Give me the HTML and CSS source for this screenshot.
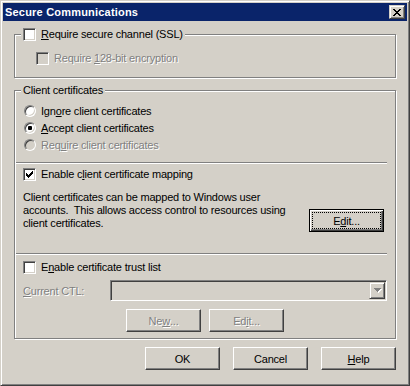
FILE: index.html
```html
<!DOCTYPE html>
<html lang="en">
<head>
    <meta charset="UTF-8">
    <title>Secure Communications</title>
    <link rel="stylesheet" href="styles.css">
</head>
<body>
    <div class="window">
        <!-- Title bar -->
        <div class="titlebar">
            <span class="title">Secure Communications</span>
            <span class="caption-btn">
                <svg width="8" height="7" viewBox="0 0 8 7" shape-rendering="crispEdges"><path fill="#000" d="M0 0h2v1h-2z M6 0h2v1h-2z M1 1h2v1h-2z M5 1h2v1h-2z M2 2h4v1h-4z M3 3h2v1h-2z M2 4h4v1h-4z M1 5h2v1h-2z M5 5h2v1h-2z M0 6h2v1h-2z M6 6h2v1h-2z"/></svg>
            </span>
        </div>

        <div class="dialog">
            <!-- SSL group -->
            <fieldset class="group">
                <legend>
                    <span class="option">
                        <span class="check"></span>
                        <span><u>R</u>equire secure channel (SSL)</span>
                    </span>
                </legend>
                <div class="option indent disabled">
                    <span class="check off"></span>
                    <span>Require <u>1</u>28-bit encryption</span>
                </div>
            </fieldset>

            <!-- Client certificates group -->
            <fieldset class="group client">
                <legend>Client certificates</legend>
                <div class="radios">
                    <div class="radio-row">
                        <span class="radio"></span>
                        <span>Ign<u>o</u>re client certificates</span>
                    </div>
                    <div class="radio-row">
                        <span class="radio"><span class="dot"></span></span>
                        <span><u>A</u>ccept client certificates</span>
                    </div>
                    <div class="radio-row disabled">
                        <span class="radio off"></span>
                        <span>Req<u>u</u>ire client certificates</span>
                    </div>
                </div>

                <div class="separator"></div>

                <div class="option mapping-check">
                    <span class="check">
                        <svg width="7" height="7" viewBox="0 0 7 7" shape-rendering="crispEdges"><path fill="#000" d="M6 0h1v1h-1z M5 1h2v1h-2z M0 2h1v1h-1z M4 2h3v1h-3z M0 3h2v1h-2z M3 3h3v1h-3z M0 4h5v1h-5z M1 5h3v1h-3z M2 6h1v1h-1z"/></svg>
                    </span>
                    <span>Enable c<u>l</u>ient certificate mapping</span>
                </div>

                <div class="mapping">
                    <p>Client certificates can be mapped to Windows user<br>accounts.&nbsp; This allows access control to resources using<br>client certificates.</p>
                    <button class="btn default"><span class="focus">E<u>d</u>it...</span></button>
                </div>

                <div class="separator second"></div>

                <div class="option ctl-check">
                    <span class="check"></span>
                    <span>E<u>n</u>able certificate trust list</span>
                </div>

                <div class="ctl-row">
                    <span class="ctl-label disabled"><u>C</u>urrent CTL:</span>
                    <div class="combo">
                        <span class="combo-btn">
                            <svg width="8" height="5" viewBox="0 0 8 5" shape-rendering="crispEdges"><path fill="#fff" d="M1 1h7v1h-7z M2 2h5v1h-5z M3 3h3v1h-3z M4 4h1v1h-1z"/><path fill="#808080" d="M0 0h7v1h-7z M1 1h5v1h-5z M2 2h3v1h-3z M3 3h1v1h-1z"/></svg>
                        </span>
                    </div>
                </div>

                <div class="ctl-buttons">
                    <button class="btn disabled">Ne<u>w</u>...</button>
                    <button class="btn disabled">Ed<u>i</u>t...</button>
                </div>
            </fieldset>

            <div class="dialog-buttons">
                <button class="btn">OK</button>
                <button class="btn">Cancel</button>
                <button class="btn"><u>H</u>elp</button>
            </div>
        </div>
    </div>
</body>
</html>
```

FILE: styles.css
```css
* {
    box-sizing: border-box;
}

body {
    margin: 0;
    font-family: "Liberation Sans", Arial, sans-serif;
    font-size: 11px;
    letter-spacing: -0.2px;
    color: #000;
    background-color: #d4d0c8;
}

.window {
    width: 410px;
    height: 386px;
    padding: 2px;
    border: 1px solid;
    border-color: #d4d0c8 #404040 #404040 #d4d0c8;
    box-shadow: inset 1px 1px 0 #fff, inset -1px -1px 0 #808080;
    background-color: #d4d0c8;
}

.titlebar {
    height: 18px;
    padding: 0 2px;
    display: flex;
    align-items: center;
    justify-content: space-between;
    background-color: #0a246a;
}

.title {
    color: #fff;
    font-weight: bold;
    letter-spacing: 0.2px;
}

.caption-btn {
    width: 16px;
    height: 14px;
    display: flex;
    align-items: center;
    justify-content: center;
    border: 1px solid;
    border-color: #d4d0c8 #404040 #404040 #d4d0c8;
    box-shadow: inset 1px 1px 0 #fff, inset -1px -1px 0 #808080;
    background-color: #d4d0c8;
}

.dialog {
    padding: 7px 11px 0;
}

u {
    text-underline-offset: 1px;
}

.disabled {
    color: #808080;
    text-shadow: 1px 1px 0 #fff;
}

/* group boxes */
.group {
    margin: 0;
    padding: 0 8px 12px;
    min-inline-size: 0;
    border: 1px solid #808080;
    box-shadow: inset 1px 1px 0 #fff, 1px 1px 0 #fff;
}

.group legend {
    margin-left: -2px;
    padding: 0 2px;
    height: 13px;
    line-height: 13px;
    background-color: #d4d0c8;
}

.group.client {
    margin-top: 6px;
    padding-bottom: 6px;
}

.option {
    display: flex;
    align-items: center;
    gap: 5px;
    height: 13px;
    line-height: 13px;
}

.option.indent {
    margin: 11px 0 0 13px;
}

.check {
    width: 13px;
    height: 13px;
    flex: none;
    display: flex;
    align-items: center;
    justify-content: center;
    border: 1px solid;
    border-color: #808080 #fff #fff #808080;
    box-shadow: inset 1px 1px 0 #404040, inset -1px -1px 0 #d4d0c8;
    background-color: #fff;
}

.check.off {
    background-color: #d4d0c8;
}

/* radio buttons */
.radios {
    margin-top: 5px;
}

.radio-row {
    height: 17px;
    display: flex;
    align-items: center;
    gap: 5px;
    padding-left: 1px;
}

.radio {
    width: 12px;
    height: 12px;
    flex: none;
    display: flex;
    align-items: center;
    justify-content: center;
    border-radius: 50%;
    border: 1px solid;
    border-color: #808080 #fff #fff #808080;
    box-shadow: inset 1px 1px 0 #404040, inset -1px -1px 0 #d4d0c8;
    background-color: #fff;
}

.radio.off {
    background-color: #d4d0c8;
}

.radio .dot {
    width: 4px;
    height: 4px;
    border-radius: 1px;
    background-color: #000;
}

.separator {
    height: 2px;
    margin: 9px 0 0 -7px;
    border-top: 1px solid #808080;
    border-bottom: 1px solid #fff;
}

.separator.second {
    margin-top: 21px;
}

.mapping-check {
    margin-top: 4px;
}

.mapping {
    display: flex;
    justify-content: space-between;
    align-items: flex-start;
    margin-top: 10px;
}

.mapping p {
    margin: 0;
    line-height: 13px;
}

.mapping .btn {
    margin: 18px 3px 0 0;
}

/* push buttons */
.btn {
    width: 75px;
    height: 23px;
    padding: 0;
    font: inherit;
    letter-spacing: inherit;
    color: #000;
    background-color: #d4d0c8;
    border: 1px solid;
    border-color: #fff #404040 #404040 #fff;
    box-shadow: inset -1px -1px 0 #808080;
    display: flex;
    align-items: center;
    justify-content: center;
}

.btn.disabled {
    color: #808080;
}

.btn.default {
    padding: 2px;
    border-color: #000;
    box-shadow: inset 1px 1px 0 #fff, inset -1px -1px 0 #404040, inset -2px -2px 0 #808080;
}

.btn .focus {
    width: 100%;
    height: 100%;
    display: flex;
    align-items: center;
    justify-content: center;
    border: 1px dotted #000;
}

.ctl-check {
    margin-top: 6px;
}

.ctl-row {
    display: flex;
    align-items: center;
    margin-top: 6px;
}

.ctl-label {
    width: 87px;
    flex: none;
}

.combo {
    flex: 1;
    height: 21px;
    padding: 1px;
    display: flex;
    justify-content: flex-end;
    border: 1px solid;
    border-color: #808080 #fff #fff #808080;
    box-shadow: inset 1px 1px 0 #404040, inset -1px -1px 0 #d4d0c8;
}

.combo-btn {
    width: 16px;
    height: 17px;
    display: flex;
    align-items: center;
    justify-content: center;
    padding-left: 1px;
    border: 1px solid;
    border-color: #d4d0c8 #404040 #404040 #d4d0c8;
    box-shadow: inset 1px 1px 0 #fff, inset -1px -1px 0 #808080;
}

.ctl-buttons {
    display: flex;
    justify-content: center;
    gap: 8px;
    margin-top: 8px;
}

.dialog-buttons {
    display: flex;
    justify-content: flex-end;
    gap: 13px;
    margin-top: 8px;
}
```
